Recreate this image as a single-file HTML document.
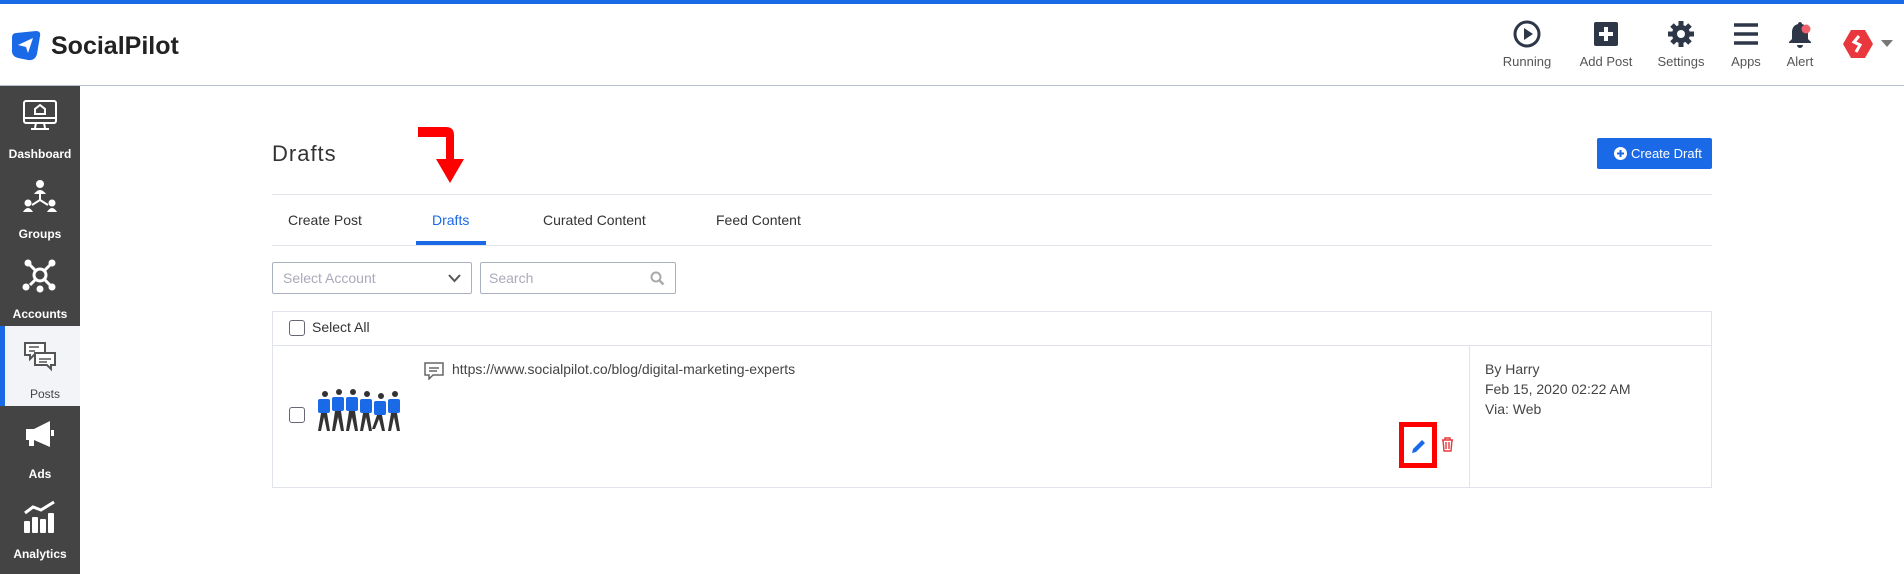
<!DOCTYPE html>
<html><head><meta charset="utf-8"><style>
*{box-sizing:border-box;margin:0;padding:0}
body{width:1904px;height:574px;overflow:hidden;background:#fff;font-family:"Liberation Sans",sans-serif;color:#333;position:relative}
.a{position:absolute}
.top{left:0;top:0;width:1904px;height:4px;background:#1a6ae8}
.hl{left:0;top:85px;width:1904px;height:1px;background:#b8c0cc}
.side{left:0;top:86px;width:80px;height:488px;background:#444}
.si{position:absolute;left:0;width:80px;height:80px;color:#fff;font-size:12px;font-weight:bold;text-align:center}
.si span{position:absolute;left:0;width:80px;bottom:5px}
.si svg{position:absolute;left:22px;top:13px}
.hi{position:absolute;top:20px;text-align:center;font-size:13px;color:#555;width:80px;margin-left:-40px}
.hi svg{display:block;margin:0 auto 6px}
.tab{top:212px;font-size:14px;color:#333}
.ln{height:1px;background:#e1e3ea}
.txt{font-size:14px;color:#444}
</style></head><body>
<div class="a top"></div>
<svg class="a" style="left:10px;top:30px" width="32" height="31" viewBox="0 0 32 31"><path d="M6 3 L26 1 Q31 1 30 6 L27 24 Q25 31 18 30 L8 28 Q1 26 2 19 L2 8 Q2 3 6 3Z" fill="#1a6ae8"/><path d="M8 15 L23 8 L18 23 L16 17Z" fill="#fff"/></svg>
<div class="a" style="left:51px;top:32px;font-size:25px;font-weight:bold;color:#222">SocialPilot</div>
<div class="hi a" style="left:1527px"><svg width="28" height="28" viewBox="0 0 28 28"><circle cx="14" cy="14" r="12" fill="none" stroke="#2d3748" stroke-width="3"/><path d="M11 8 L20 14 L11 20Z" fill="#2d3748"/></svg>Running</div>
<div class="hi a" style="left:1606px"><svg width="28" height="28" viewBox="0 0 28 28"><rect x="2" y="2" width="24" height="24" rx="2" fill="#2d3748"/><path d="M14 7v14M7 14h14" stroke="#fff" stroke-width="4"/></svg>Add Post</div>
<div class="hi a" style="left:1681px"><svg width="28" height="28" viewBox="0 0 28 28"><g fill="#2d3748"><circle cx="14" cy="14" r="9"/><g stroke="#2d3748" stroke-width="5"><path d="M14 1v26M1 14h26M5 5l18 18M23 5L5 23"/></g></g><circle cx="14" cy="14" r="4" fill="#fff"/></svg>Settings</div>
<div class="hi a" style="left:1746px"><svg width="28" height="28" viewBox="0 0 28 28"><path d="M2 5h24M2 14h24M2 23h24" stroke="#2d3748" stroke-width="3.5"/></svg>Apps</div>
<div class="hi a" style="left:1800px"><svg width="28" height="28" viewBox="0 0 28 28"><path d="M14 2c-1 0-2 1-2 2-4 1-6 4-6 8v7l-3 3v1h22v-1l-3-3v-7c0-4-2-7-6-8 0-1-1-2-2-2zM11 25a3 3 0 006 0z" fill="#2d3748"/><circle cx="20" cy="9" r="4.5" fill="#f0606a"/></svg>Alert</div>
<svg class="a" style="left:1842px;top:28px" width="32" height="32" viewBox="0 0 32 32"><path d="M9 2h14l8 14-8 14H9L1 16Z" fill="#e8383d"/><path d="M17 8l-5 6 6 3-4 7" stroke="#fff" stroke-width="3" fill="none"/></svg>
<svg class="a" style="left:1881px;top:40px" width="12" height="8"><path d="M0 0h12L6 7z" fill="#777"/></svg>
<div class="a hl"></div>
<div class="a side">
<div class="si" style="top:0"><svg width="36" height="34" viewBox="0 0 36 34"><rect x="2" y="2" width="32" height="22" rx="2" fill="none" stroke="#fff" stroke-width="2"/><path d="M2 19h32M14 24l-1 5M22 24l1 5M9 30h18" stroke="#fff" stroke-width="2"/><path d="M13 15v-5l5-4 5 4v5z" fill="none" stroke="#fff" stroke-width="2"/></svg><span>Dashboard</span></div>
<div class="si" style="top:80px"><svg width="36" height="34" viewBox="0 0 36 34"><g fill="#fff"><circle cx="18" cy="5" r="4"/><path d="M12 15q6-8 12 0z"/><circle cx="6" cy="24" r="3.5"/><path d="M1 33q5-8 10 0z"/><circle cx="30" cy="24" r="3.5"/><path d="M25 33q5-8 10 0z"/></g><path d="M18 15v6l-8 5M18 21l8 5" stroke="#fff" stroke-width="2" fill="none"/></svg><span>Groups</span></div>
<div class="si" style="top:160px"><svg width="36" height="34" viewBox="0 0 36 34"><g stroke="#fff" stroke-width="3" fill="none"><circle cx="18" cy="16" r="6"/><path d="M8 6l6 6M28 6l-6 6M8 26l6-6M28 26l-6-6"/></g><g fill="#fff"><circle cx="6" cy="4" r="3.5"/><circle cx="30" cy="4" r="3.5"/><circle cx="4" cy="28" r="3.5"/><circle cx="30" cy="28" r="3.5"/><circle cx="18" cy="30" r="3.5"/></g></svg><span>Accounts</span></div>
<div class="si" style="top:240px;background:#f3f4f8;color:#444;font-weight:normal;border-left:5px solid #1a6ae8"><svg style="left:17px" width="36" height="34" viewBox="0 0 36 34"><g fill="#fff" stroke="#555" stroke-width="2"><path d="M3 4h20v12H12l-4 4v-4H3z"/><path d="M13 14h20v12h-4v4l-4-4H13z"/></g><path d="M7 8h10M7 12h6M17 20h12M17 23h8" stroke="#555" stroke-width="1.5"/></svg><span>Posts</span></div>
<div class="si" style="top:320px"><svg width="36" height="34" viewBox="0 0 36 34"><path d="M4 10h8l16-8v26L12 21v6H7v-6H4z" fill="#fff"/><rect x="29" y="11" width="3" height="6" fill="#fff"/></svg><span>Ads</span></div>
<div class="si" style="top:400px"><svg width="36" height="34" viewBox="0 0 36 34"><g fill="#fff"><rect x="2" y="22" width="6" height="12" rx="1"/><rect x="10" y="18" width="6" height="16" rx="1"/><rect x="18" y="20" width="6" height="14" rx="1"/><rect x="26" y="14" width="6" height="20" rx="1"/></g><path d="M3 14l8-6 8 3 13-8" stroke="#fff" stroke-width="3" fill="none"/></svg><span>Analytics</span></div>
</div>
<div class="a" style="left:272px;top:141px;font-size:22px;color:#333;letter-spacing:1px">Drafts</div>
<svg class="a" style="left:418px;top:127px" width="48" height="56" viewBox="0 0 48 56"><path d="M0 0h28q8 0 8 8v24h10L32 56 18 32h10V10H0z" fill="#f00"/></svg>
<div class="a" style="left:1597px;top:138px;width:115px;height:31px;background:#1a6ae8;border-radius:2px;color:#fff;font-size:13px;line-height:31px;padding-left:17px"><svg width="13" height="13" viewBox="0 0 13 13" style="vertical-align:-2px;margin-right:4px"><circle cx="6.5" cy="6.5" r="6.5" fill="#fff"/><path d="M6.5 3v7M3 6.5h7" stroke="#1a6ae8" stroke-width="2"/></svg>Create Draft</div>
<div class="a ln" style="left:272px;top:194px;width:1440px"></div>
<div class="a tab" style="left:288px">Create Post</div>
<div class="a tab" style="left:432px;color:#1a6ae8">Drafts</div>
<div class="a tab" style="left:543px">Curated Content</div>
<div class="a tab" style="left:716px">Feed Content</div>
<div class="a" style="left:416px;top:241px;width:70px;height:4px;background:#1a6ae8"></div>
<div class="a ln" style="left:272px;top:245px;width:1440px"></div>
<div class="a" style="left:272px;top:262px;width:200px;height:32px;border:1px solid #aab2c0;border-radius:2px;font-size:14px;color:#aab;line-height:30px;padding-left:10px">Select Account<svg style="position:absolute;right:10px;top:11px" width="13" height="9"><path d="M1 1l5.5 6L12 1" stroke="#555" stroke-width="2" fill="none"/></svg></div>
<div class="a" style="left:480px;top:262px;width:196px;height:32px;border:1px solid #aab2c0;border-radius:2px;font-size:14px;color:#aab;line-height:30px;padding-left:8px">Search<svg style="position:absolute;right:10px;top:8px" width="15" height="15"><circle cx="6" cy="6" r="4.5" stroke="#aaa" stroke-width="2" fill="none"/><path d="M9.5 9.5l4 4" stroke="#aaa" stroke-width="2.5"/></svg></div>
<div class="a" style="left:272px;top:311px;width:1440px;height:177px;border:1px solid #e1e3ea"></div>
<div class="a ln" style="left:272px;top:345px;width:1440px"></div>
<div class="a" style="left:1469px;top:345px;width:1px;height:142px;background:#e1e3ea"></div>
<div class="a" style="left:289px;top:320px;width:16px;height:16px;border:1px solid #667;border-radius:3px"></div>
<div class="a txt" style="left:312px;top:319px;color:#333">Select All</div>
<div class="a" style="left:289px;top:407px;width:16px;height:16px;border:1px solid #667;border-radius:3px"></div>
<svg class="a" style="left:316px;top:389px" width="88" height="44" viewBox="0 0 88 44"><g fill="#333"><circle cx="9" cy="5" r="3"/><circle cx="23" cy="3" r="3"/><circle cx="37" cy="3" r="3"/><circle cx="51" cy="5" r="3"/><circle cx="65" cy="7" r="3"/><circle cx="79" cy="5" r="3"/><path d="M5 24l-3 18h3l3-14 3 14h3l-3-18zM19 22l-3 20h3l3-14 3 14h3l-3-20zM33 22l-3 20h3l3-14 3 14h3l-3-20zM47 24l-3 18h3l3-14 3 14h3l-3-18zM61 26l-5 14h3l4-10 3 12h3l-3-16zM75 24l-3 18h3l3-14 3 14h3l-3-18z"/></g><g fill="#1a6ae8"><rect x="2" y="10" width="12" height="14" rx="2"/><rect x="16" y="8" width="12" height="14" rx="2"/><rect x="30" y="8" width="12" height="14" rx="2"/><rect x="44" y="10" width="12" height="14" rx="2"/><rect x="58" y="12" width="12" height="14" rx="2"/><rect x="72" y="10" width="12" height="14" rx="2"/></g></svg>
<svg class="a" style="left:423px;top:362px" width="22" height="18" viewBox="0 0 22 18"><path d="M2 1h18v12H10l-4 4v-4H2z" fill="none" stroke="#666" stroke-width="1.5"/><path d="M6 6h10M6 9h8" stroke="#666" stroke-width="1.5"/></svg>
<div class="a txt" style="left:452px;top:361px">https://www.socialpilot.co/blog/digital-marketing-experts</div>
<div class="a" style="left:1399px;top:422px;width:38px;height:46px;border:5px solid #f00"></div>
<svg class="a" style="left:1411px;top:438px" width="16" height="16" viewBox="0 0 16 16"><path d="M1 15l1-4L11 2l3 3-9 9z" fill="#1a6ae8"/></svg>
<svg class="a" style="left:1441px;top:437px" width="13" height="15" viewBox="0 0 13 15"><path d="M1 3h11M4 3V1h5v2M2 3l1 11h7l1-11M5 5v7M8 5v7" stroke="#e8383d" stroke-width="1.4" fill="none"/></svg>
<div class="a txt" style="left:1485px;top:359px;line-height:20px">By Harry<br>Feb 15, 2020 02:22 AM<br>Via: Web</div>
</body></html>
